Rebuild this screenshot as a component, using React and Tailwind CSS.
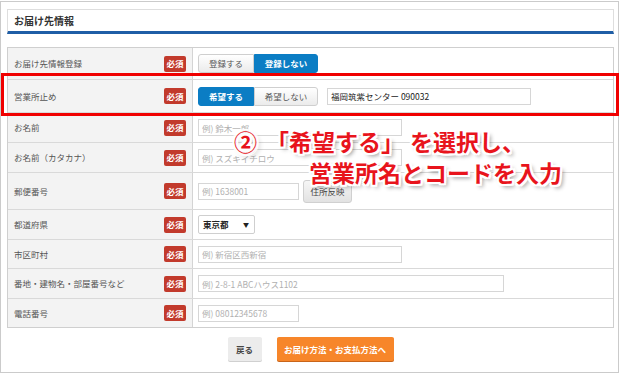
import React from "react";

const jp = "font-['Noto_Sans_CJK_JP','Noto_Sans',sans-serif]";

function Badge() {
  return (
    <span className="flex h-[16px] w-[22px] items-center justify-center rounded-[2px] bg-[#c23a2c] text-[8.5px] font-bold text-white">
      必須
    </span>
  );
}

function Toggle({ left, right, active }) {
  const on = "bg-[#0b7dc4] text-white font-bold border-[#0b7dc4]";
  const off = "bg-gradient-to-b from-white to-[#ebebeb] text-[#555] border-[#cfcfcf]";
  return (
    <div className="flex h-[19px] text-[8.5px]">
      <span
        className={`flex w-[56px] items-center justify-center rounded-l-[3px] border ${
          active === "left" ? on : off
        }`}
      >
        {left}
      </span>
      <span
        className={`flex w-[64px] items-center justify-center rounded-r-[3px] border ${
          active === "right" ? on : off
        }`}
      >
        {right}
      </span>
    </div>
  );
}

function Field({ w, placeholder }) {
  return (
    <input
      readOnly
      placeholder={placeholder}
      className={`${w} h-[17px] border border-[#d6d6d6] bg-white px-[3px] text-[8.5px] text-[#333] outline-none placeholder:text-[#b0b0b0]`}
    />
  );
}

const rows = [
  {
    label: "お届け先情報登録",
    h: "h-[32px]",
    content: <Toggle left="登録する" right="登録しない" active="right" />,
  },
  {
    label: "営業所止め",
    h: "h-[33px]",
    content: (
      <div className="flex items-center gap-[9px]">
        <Toggle left="希望する" right="希望しない" active="left" />
        <input
          readOnly
          value="福岡筑紫センター 090032"
          className="h-[17px] w-[204px] border border-[#d6d6d6] bg-white px-[3px] text-[8.5px] text-[#222] outline-none"
        />
      </div>
    ),
  },
  { label: "お名前", h: "h-[30px]", content: <Field w="w-[204px]" placeholder="例) 鈴木一郎" /> },
  {
    label: "お名前（カタカナ）",
    h: "h-[30px]",
    content: <Field w="w-[204px]" placeholder="例) スズキイチロウ" />,
  },
  {
    label: "郵便番号",
    h: "h-[37px]",
    content: (
      <div className="flex items-center gap-[4px]">
        <Field w="w-[101px]" placeholder="例) 1638001" />
        <span className="flex h-[23px] w-[49px] items-center justify-center rounded-[3px] border border-[#d0d0d0] bg-gradient-to-b from-[#f6f6f6] to-[#e2e2e2] text-[8.5px] text-[#444]">
          住所反映
        </span>
      </div>
    ),
  },
  {
    label: "都道府県",
    h: "h-[30px]",
    content: (
      <div className="flex h-[19px] w-[57px] items-center justify-between rounded-[2px] border border-[#cfcfcf] bg-white pl-[4px] pr-[5px] text-[8.5px] font-bold text-[#222]">
        <span>東京都</span>
        <span className="text-[6px]">▼</span>
      </div>
    ),
  },
  { label: "市区町村", h: "h-[29px]", content: <Field w="w-[204px]" placeholder="例) 新宿区西新宿" /> },
  {
    label: "番地・建物名・部屋番号など",
    h: "h-[30px]",
    content: <Field w="w-[306px]" placeholder="例) 2-8-1 ABCハウス1102" />,
  },
  { label: "電話番号", h: "h-[28px]", content: <Field w="w-[101px]" placeholder="例) 08012345678" /> },
];

const outline =
  "[text-shadow:2px_0_0_#fff,-2px_0_0_#fff,0_2px_0_#fff,0_-2px_0_#fff,2px_2px_0_#fff,-2px_-2px_0_#fff,2px_-2px_0_#fff,-2px_2px_0_#fff,3px_3px_4px_rgba(0,0,0,0.45)]";

export default function App() {
  return (
    <div className={`relative h-[374px] w-[620px] overflow-hidden bg-white ${jp}`}>
      <div className="mt-[1px] h-[372px] w-[619px] border border-[#cbcbcb] pl-[6px] pt-[7px]">
        {/* header */}
        <div className="flex h-[25px] w-[607px] items-center border-x border-t border-b-[3px] border-x-[#dedede] border-t-[#dedede] border-b-[#1f5ea6] pl-[6px] text-[10px] font-bold text-[#333]">
          お届け先情報
        </div>

        {/* form table */}
        <div className="mt-[13px] w-[607px] border border-[#cfcfcf]">
          {rows.map((r, i) => (
            <div
              key={r.label}
              className={`flex ${r.h} ${i < rows.length - 1 ? "border-b border-[#d9d9d9]" : ""}`}
            >
              <div className="flex w-[185px] items-center justify-between border-r border-[#d4d4d4] bg-[#f3f3f3] pl-[6px] pr-[6px] text-[8.5px] text-[#555]">
                <span>{r.label}</span>
                <Badge />
              </div>
              <div className="flex flex-1 items-center pl-[5px]">{r.content}</div>
            </div>
          ))}
        </div>

        {/* buttons */}
        <div className="mt-[9px] flex w-[607px] justify-center gap-[15px]">
          <span className="flex h-[24px] w-[34px] items-center justify-center rounded-[2px] bg-[#ececec] text-[8.5px] font-bold text-[#444] shadow-[0_1px_0_#d0d0d0]">
            戻る
          </span>
          <span className="flex h-[24px] w-[117px] items-center justify-center rounded-[2px] bg-[#f7862a] text-[8.5px] font-bold text-white shadow-[0_1px_0_#c9651a]">
            お届け方法・お支払方法へ
          </span>
        </div>
      </div>

      {/* red highlight frame */}
      <div className="absolute left-[1px] top-[73px] h-[43px] w-[618px] border-[3px] border-[#f00000]" />

      {/* annotation */}
      <span
        className={`absolute left-[234px] top-[126px] text-[23px] font-bold leading-[31px] text-[#e8141c] ${outline}`}
      >
        ②
      </span>
      <div
        className={`absolute left-[266px] top-[126px] whitespace-nowrap text-[23px] font-bold leading-[31px] text-[#e8141c] ${outline}`}
      >
        <div>
          「希望する」<span className="ml-[6px]">を選択し、</span>
        </div>
        <div className="ml-[43px]">営業所名とコードを入力</div>
      </div>
    </div>
  );
}
